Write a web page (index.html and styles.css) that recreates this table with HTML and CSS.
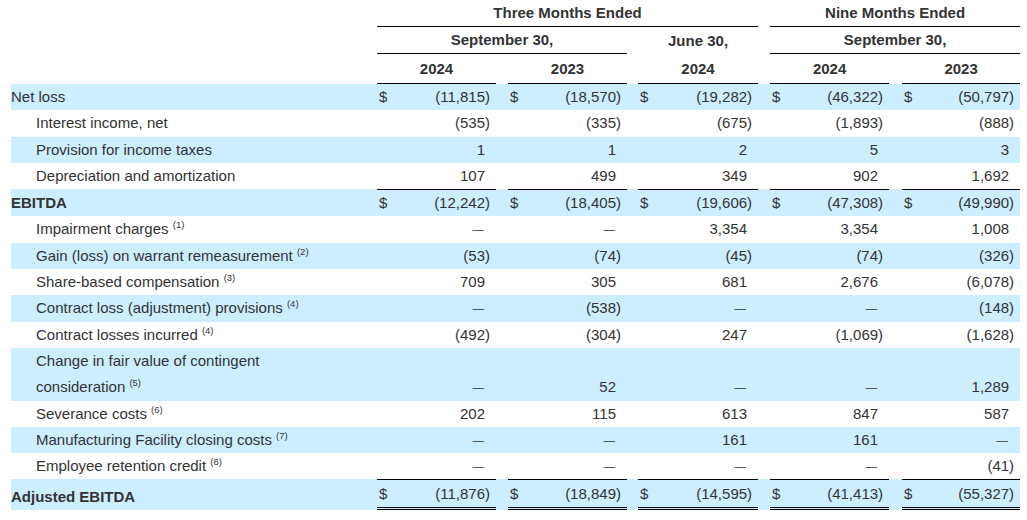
FILE: index.html
```html
<!DOCTYPE html>
<html lang="en">
<head>
<meta charset="utf-8">
<title>Adjusted EBITDA reconciliation</title>
<link rel="stylesheet" href="styles.css">
</head>
<body>
<table class="fin">
  <colgroup>
    <col class="w-label">
    <col class="w-col"><col class="w-sp">
    <col class="w-col"><col class="w-sp2">
    <col class="w-col3"><col class="w-sp">
    <col class="w-col"><col class="w-sp3">
    <col class="w-col5">
  </colgroup>
  <thead>
    <tr class="h1">
      <th></th>
      <th colspan="5" class="ul">Three Months Ended</th>
      <th></th>
      <th colspan="3" class="ul">Nine Months Ended</th>
    </tr>
    <tr class="h2">
      <th></th>
      <th colspan="3" class="ul">September 30,</th>
      <th></th>
      <th>June 30,</th>
      <th></th>
      <th colspan="3" class="ul">September 30,</th>
    </tr>
    <tr class="h3">
      <th></th>
      <th class="ul">2024</th><th></th>
      <th class="ul">2023</th><th></th>
      <th class="ul">2024</th><th></th>
      <th class="ul">2024</th><th></th>
      <th class="ul">2023</th>
    </tr>
  </thead>
  <tbody>
    <tr>
      <td class="lbl">Net loss</td>
      <td class="n"><div class="c"><span>$</span><span>(11,815)</span></div></td><td></td>
      <td class="n"><div class="c"><span>$</span><span>(18,570)</span></div></td><td></td>
      <td class="n"><div class="c"><span>$</span><span>(19,282)</span></div></td><td></td>
      <td class="n"><div class="c"><span>$</span><span>(46,322)</span></div></td><td></td>
      <td class="n"><div class="c"><span>$</span><span>(50,797)</span></div></td>
    </tr>
    <tr>
      <td class="lbl ind">Interest income, net</td>
      <td class="n"><div class="c"><span>(535)</span></div></td><td></td>
      <td class="n"><div class="c"><span>(335)</span></div></td><td></td>
      <td class="n"><div class="c"><span>(675)</span></div></td><td></td>
      <td class="n"><div class="c"><span>(1,893)</span></div></td><td></td>
      <td class="n"><div class="c"><span>(888)</span></div></td>
    </tr>
    <tr>
      <td class="lbl ind">Provision for income taxes</td>
      <td class="n"><div class="c"><span class="p">1</span></div></td><td></td>
      <td class="n"><div class="c"><span class="p">1</span></div></td><td></td>
      <td class="n"><div class="c"><span class="p">2</span></div></td><td></td>
      <td class="n"><div class="c"><span class="p">5</span></div></td><td></td>
      <td class="n"><div class="c"><span class="p">3</span></div></td>
    </tr>
    <tr>
      <td class="lbl ind">Depreciation and amortization</td>
      <td class="n"><div class="c"><span class="p">107</span></div></td><td></td>
      <td class="n"><div class="c"><span class="p">499</span></div></td><td></td>
      <td class="n"><div class="c"><span class="p">349</span></div></td><td></td>
      <td class="n"><div class="c"><span class="p">902</span></div></td><td></td>
      <td class="n"><div class="c"><span class="p">1,692</span></div></td>
    </tr>
    <tr class="total">
      <td class="lbl b">EBITDA</td>
      <td class="n"><div class="c"><span>$</span><span>(12,242)</span></div></td><td></td>
      <td class="n"><div class="c"><span>$</span><span>(18,405)</span></div></td><td></td>
      <td class="n"><div class="c"><span>$</span><span>(19,606)</span></div></td><td></td>
      <td class="n"><div class="c"><span>$</span><span>(47,308)</span></div></td><td></td>
      <td class="n"><div class="c"><span>$</span><span>(49,990)</span></div></td>
    </tr>
    <tr>
      <td class="lbl ind">Impairment charges <sup>(1)</sup></td>
      <td class="n"><div class="c"><span class="d">—</span></div></td><td></td>
      <td class="n"><div class="c"><span class="d">—</span></div></td><td></td>
      <td class="n"><div class="c"><span class="p">3,354</span></div></td><td></td>
      <td class="n"><div class="c"><span class="p">3,354</span></div></td><td></td>
      <td class="n"><div class="c"><span class="p">1,008</span></div></td>
    </tr>
    <tr>
      <td class="lbl ind">Gain (loss) on warrant remeasurement <sup>(2)</sup></td>
      <td class="n"><div class="c"><span>(53)</span></div></td><td></td>
      <td class="n"><div class="c"><span>(74)</span></div></td><td></td>
      <td class="n"><div class="c"><span>(45)</span></div></td><td></td>
      <td class="n"><div class="c"><span>(74)</span></div></td><td></td>
      <td class="n"><div class="c"><span>(326)</span></div></td>
    </tr>
    <tr>
      <td class="lbl ind">Share-based compensation <sup>(3)</sup></td>
      <td class="n"><div class="c"><span class="p">709</span></div></td><td></td>
      <td class="n"><div class="c"><span class="p">305</span></div></td><td></td>
      <td class="n"><div class="c"><span class="p">681</span></div></td><td></td>
      <td class="n"><div class="c"><span class="p">2,676</span></div></td><td></td>
      <td class="n"><div class="c"><span>(6,078)</span></div></td>
    </tr>
    <tr>
      <td class="lbl ind">Contract loss (adjustment) provisions <sup>(4)</sup></td>
      <td class="n"><div class="c"><span class="d">—</span></div></td><td></td>
      <td class="n"><div class="c"><span>(538)</span></div></td><td></td>
      <td class="n"><div class="c"><span class="d">—</span></div></td><td></td>
      <td class="n"><div class="c"><span class="d">—</span></div></td><td></td>
      <td class="n"><div class="c"><span>(148)</span></div></td>
    </tr>
    <tr>
      <td class="lbl ind">Contract losses incurred <sup>(4)</sup></td>
      <td class="n"><div class="c"><span>(492)</span></div></td><td></td>
      <td class="n"><div class="c"><span>(304)</span></div></td><td></td>
      <td class="n"><div class="c"><span class="p">247</span></div></td><td></td>
      <td class="n"><div class="c"><span>(1,069)</span></div></td><td></td>
      <td class="n"><div class="c"><span>(1,628)</span></div></td>
    </tr>
    <tr>
      <td class="lbl ind">Change in fair value of contingent<br>consideration <sup>(5)</sup></td>
      <td class="n"><div class="c"><span class="d">—</span></div></td><td></td>
      <td class="n"><div class="c"><span class="p">52</span></div></td><td></td>
      <td class="n"><div class="c"><span class="d">—</span></div></td><td></td>
      <td class="n"><div class="c"><span class="d">—</span></div></td><td></td>
      <td class="n"><div class="c"><span class="p">1,289</span></div></td>
    </tr>
    <tr>
      <td class="lbl ind">Severance costs <sup>(6)</sup></td>
      <td class="n"><div class="c"><span class="p">202</span></div></td><td></td>
      <td class="n"><div class="c"><span class="p">115</span></div></td><td></td>
      <td class="n"><div class="c"><span class="p">613</span></div></td><td></td>
      <td class="n"><div class="c"><span class="p">847</span></div></td><td></td>
      <td class="n"><div class="c"><span class="p">587</span></div></td>
    </tr>
    <tr>
      <td class="lbl ind">Manufacturing Facility closing costs <sup>(7)</sup></td>
      <td class="n"><div class="c"><span class="d">—</span></div></td><td></td>
      <td class="n"><div class="c"><span class="d">—</span></div></td><td></td>
      <td class="n"><div class="c"><span class="p">161</span></div></td><td></td>
      <td class="n"><div class="c"><span class="p">161</span></div></td><td></td>
      <td class="n"><div class="c"><span class="d">—</span></div></td>
    </tr>
    <tr>
      <td class="lbl ind">Employee retention credit <sup>(8)</sup></td>
      <td class="n"><div class="c"><span class="d">—</span></div></td><td></td>
      <td class="n"><div class="c"><span class="d">—</span></div></td><td></td>
      <td class="n"><div class="c"><span class="d">—</span></div></td><td></td>
      <td class="n"><div class="c"><span class="d">—</span></div></td><td></td>
      <td class="n"><div class="c"><span>(41)</span></div></td>
    </tr>
    <tr class="total grand">
      <td class="lbl b">Adjusted EBITDA</td>
      <td class="n"><div class="c"><span>$</span><span>(11,876)</span></div></td><td></td>
      <td class="n"><div class="c"><span>$</span><span>(18,849)</span></div></td><td></td>
      <td class="n"><div class="c"><span>$</span><span>(14,595)</span></div></td><td></td>
      <td class="n"><div class="c"><span>$</span><span>(41,413)</span></div></td><td></td>
      <td class="n"><div class="c"><span>$</span><span>(55,327)</span></div></td>
    </tr>
  </tbody>
</table>
</body>
</html>
```
FILE: styles.css
```css
body {
  margin: 0;
  background: #ffffff;
  color: #333333;
  font-family: "Liberation Sans", Arial, Helvetica, sans-serif;
  font-size: 15px;
}

.fin {
  margin-left: 11px;
  width: 1009px;
  table-layout: fixed;
  border-collapse: separate;
  border-spacing: 0;
}

.w-label { width: 366px; }
.w-col { width: 119px; }
.w-col3 { width: 120px; }
.w-col5 { width: 118px; }
.w-sp { width: 12px; }
.w-sp2 { width: 11px; }
.w-sp3 { width: 13px; }

.fin th {
  padding: 0;
  font-weight: bold;
  text-align: center;
  white-space: nowrap;
  line-height: 26px;
  vertical-align: middle;
}

.fin .h3 th {
  line-height: 29px;
}

.fin th.ul {
  border-bottom: 1px solid #000000;
}

.fin td {
  padding: 0;
  line-height: 26.3px;
  white-space: nowrap;
  vertical-align: bottom;
}

.fin tbody tr:nth-child(odd) {
  background: #cceeff;
}

.fin td.lbl {
  text-align: left;
}

.fin td.lbl.ind {
  padding-left: 25px;
}

.fin td.lbl.b {
  font-weight: bold;
}

.fin td.n {
  padding: 0 6px 0 2px;
}

.c {
  display: flex;
  justify-content: space-between;
  align-items: baseline;
}

.c span:only-child {
  margin-left: auto;
}

.c .p {
  padding-right: 5px;
}

.c .d {
  padding-right: 6px;
  font-size: 11.5px;
}

sup {
  font-size: 9.5px;
  line-height: 0;
  vertical-align: 6px;
}

.fin .total td.n {
  border-top: 1px solid #000000;
}

.fin .grand td {
  line-height: 27px;
}

.fin .grand td.n {
  border-bottom: 3px double #000000;
}
```
